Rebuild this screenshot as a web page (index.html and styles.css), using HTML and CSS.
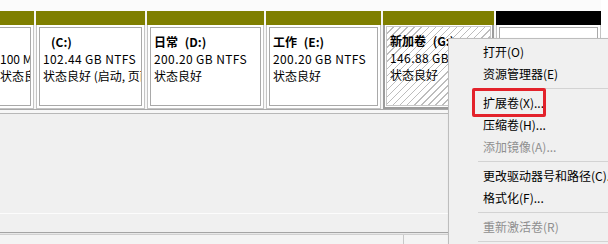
FILE: index.html
```html
<!DOCTYPE html>
<html lang="zh-CN">
<head>
<meta charset="utf-8">
<title>磁盘管理</title>
<link rel="stylesheet" href="styles.css">
</head>
<body>
<div class="win">
  <div class="topstrip"></div>
  <div class="disk">
    <div class="part p1">
      <div class="bar olive"></div>
      <div class="body"><div class="inner">
        <div class="line"></div>
        <div class="line">100 MB</div>
        <div class="line">状态良好 (EFI 系统分区)</div>
      </div></div>
    </div>
    <div class="part p2">
      <div class="bar olive"></div>
      <div class="body"><div class="inner">
        <div class="line b"><span class="drv">(C:)</span></div>
        <div class="line num">102.44 GB NTFS</div>
        <div class="line">状态良好 (启动, 页面文件, 故障转储)</div>
      </div></div>
    </div>
    <div class="part p3">
      <div class="bar olive"></div>
      <div class="body"><div class="inner">
        <div class="line b">日常 <span class="drv">(D:)</span></div>
        <div class="line num">200.20 GB NTFS</div>
        <div class="line">状态良好</div>
      </div></div>
    </div>
    <div class="part p4">
      <div class="bar olive"></div>
      <div class="body"><div class="inner">
        <div class="line b">工作 <span class="drv">(E:)</span></div>
        <div class="line num">200.20 GB NTFS</div>
        <div class="line">状态良好</div>
      </div></div>
    </div>
    <div class="part p5 sel">
      <div class="bar olive"></div>
      <div class="body"><div class="inner hatch">
        <div class="line b">新加卷 <span class="drv">(G:)</span></div>
        <div class="line num">146.88 GB NTFS</div>
        <div class="line">状态良好</div>
      </div></div>
    </div>
    <div class="part p6">
      <div class="bar black"></div>
      <div class="body"><div class="inner">
        <div class="line"></div>
      </div></div>
    </div>
  </div>
  <div class="rule"></div>
  <div class="blank"></div>
  <div class="lightline"></div>
  <div class="blank2"></div>
  <div class="rule2"></div>
  <div class="bottom"><div class="cellA"></div><div class="cellB"></div></div>
</div>

<div class="menu">
  <div class="item">打开(O)</div>
  <div class="item">资源管理器(E)</div>
  <div class="sep"></div>
  <div class="item">扩展卷(X)...</div>
  <div class="item">压缩卷(H)...</div>
  <div class="item dis">添加镜像(A)...</div>
  <div class="sep"></div>
  <div class="item">更改驱动器号和路径(C)...</div>
  <div class="item">格式化(F)...</div>
  <div class="sep"></div>
  <div class="item dis">重新激活卷(R)</div>
  <div class="sep"></div>
</div>
<div class="annot"></div>
</body>
</html>
```
FILE: styles.css
```css
html, body {
  margin: 0;
  padding: 0;
  width: 608px;
  height: 244px;
  overflow: hidden;
  background: #ffffff;
  font-family: "Noto Sans CJK SC", "Noto Sans", sans-serif;
  font-size: 12px;
  color: #000;
}
.win {
  width: 601px;
  height: 244px;
  background: #f0f0f0;
  overflow: hidden;
}
.topstrip {
  height: 11px;
  background: #fbfbfb;
}
.disk {
  display: flex;
  gap: 2px;
  margin-left: -8px;
  height: 98px;
  background: #f7f7f7;
}
.part {
  display: flex;
  flex-direction: column;
  flex: none;
}
.p1 { width: 42px; }
.p2 { width: 109px; }
.p3 { width: 117px; }
.p4 { width: 115px; }
.p5 { width: 111px; }
.p6 { width: 105px; }
.bar {
  height: 14px;
  flex: none;
}
.olive { background: #7f7f00; }
.black { background: #000; }
.body {
  flex: 1;
  border: 1px solid #c4c4c4;
  border-top: none;
  padding: 2px;
  background: #fff;
  display: flex;
}
.inner {
  flex: 1;
  border: 1px solid #a9a9a9;
  background: #fff;
  padding: 5px 3px 0;
  overflow: hidden;
  white-space: nowrap;
}
.p1 .inner { padding-left: 4px; }
.sel .body {
  border: 2px solid #9c9c9c;
  border-top: none;
  padding: 1px;
  background: #fff;
}
.hatch {
  border-color: #c8c8c8;
  background: repeating-linear-gradient(135deg, #ffffff 0 4px, #bdbdbd 4px 5px);
}
.line {
  height: 17px;
  line-height: 17px;
}
.num { letter-spacing: 0.4px; }
.b { font-weight: bold; }
.drv { margin-left: 4px; }
.p2 .drv { margin-left: 8px; }
.rule {
  height: 3px;
  border-top: 1px solid #a8a8a8;
  border-bottom: 1px solid #b8b8b8;
  background: #f7f7f7;
}
.blank {
  height: 99px;
  background: #f0f0f0;
}
.lightline {
  height: 1px;
  background: #fcfcfc;
}
.blank2 {
  height: 18px;
  background: #f0f0f0;
}
.rule2 {
  height: 1px;
  border-top: 1px solid #a4a4a4;
  border-bottom: 1px solid #d0d0d0;
  background: #e8e8e8;
}
.bottom {
  display: flex;
  height: 20px;
  background: #f4f4f4;
}
.cellA {
  width: 403px;
  border-right: 1px solid #c8c8c8;
}
.cellB { flex: 1; }

.menu {
  position: absolute;
  left: 448px;
  top: 38px;
  width: 200px;
  padding-top: 2px;
  background: #f0f0f0;
  border: 1px solid #bdbdbd;
  box-shadow: 2px 2px 3px rgba(0,0,0,0.25);
}
.item {
  height: 22px;
  line-height: 22px;
  padding-left: 34px;
  white-space: nowrap;
  color: #000;
}
.item.dis { color: #8f8f8f; }
.sep {
  height: 7px;
  display: flex;
  align-items: center;
  padding-left: 29px;
}
.sep::after {
  content: "";
  flex: 1;
  height: 1px;
  background: #d3d3d3;
}
.annot {
  position: absolute;
  left: 472px;
  top: 88px;
  width: 68px;
  height: 23px;
  border: 3px solid #e3222b;
  border-radius: 2px;
}
```
